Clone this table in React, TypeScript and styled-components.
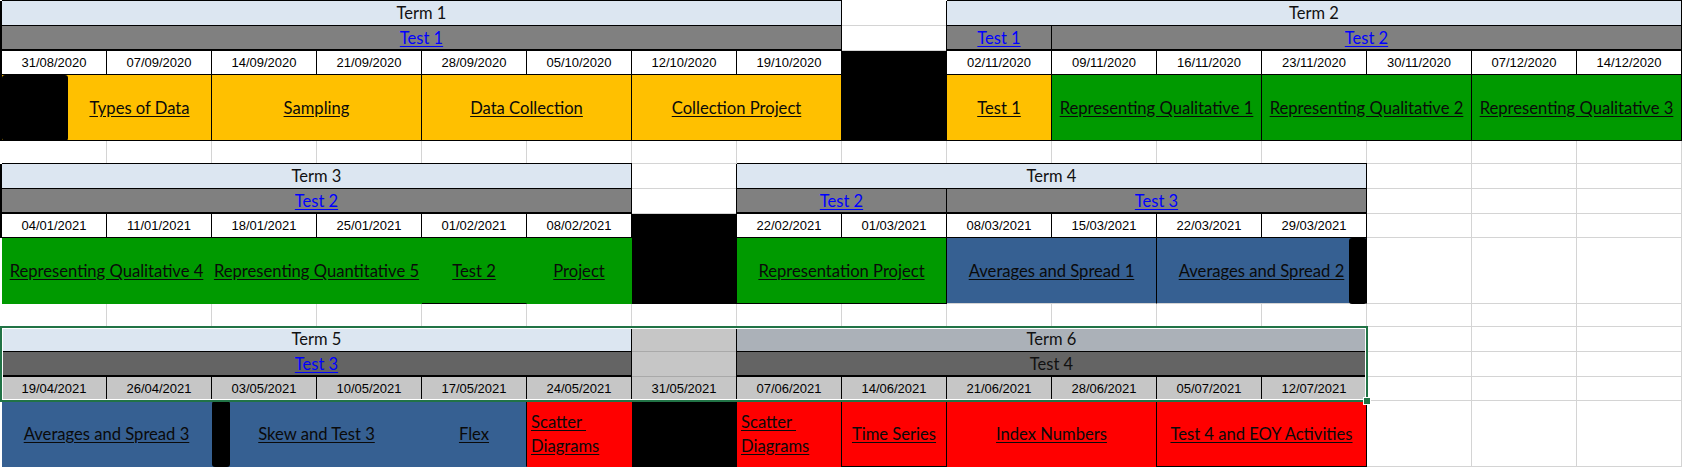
import React from "react";
import styled, { createGlobalStyle } from "styled-components";

const GlobalStyle = createGlobalStyle`
  html, body {
    margin: 0;
    padding: 0;
    background: #fff;
  }
  body {
    width: 1683px;
    height: 470px;
    overflow: hidden;
  }
`;

const COL = 105;
const GRID = "#d4d4d4";
const INK = "#000";

const Sheet = styled.div`
  padding: 1px 0 0 2px;
  display: flex;
  flex-direction: column;
  font-family: Lato, "Liberation Sans", sans-serif;
`;

const Block = styled.div`
  position: relative;
  display: grid;
  grid-template-columns: repeat(16, ${COL}px);
  grid-template-rows: 25px 25px 24px 66px 23px;
`;

type CellProps = {
  $span?: number;
  $bg?: string;
  $line?: string;
  $bottom?: string;
  $thick?: boolean;
  $top?: boolean;
  $left?: number;
  $align?: "center" | "left";
};

const Cell = styled.div<CellProps>`
  position: relative;
  grid-column: span ${(p) => p.$span ?? 1};
  box-sizing: border-box;
  display: flex;
  align-items: center;
  justify-content: ${(p) => (p.$align === "left" ? "flex-start" : "center")};
  padding-left: ${(p) => (p.$align === "left" ? "4px" : "0")};
  background: ${(p) => p.$bg ?? "#fff"};
  border-right: 1px solid ${(p) => p.$line ?? GRID};
  border-bottom: ${(p) => (p.$thick ? 2 : 1)}px solid
    ${(p) => p.$bottom ?? p.$line ?? GRID};
  box-shadow: ${(p) => {
    const s: string[] = [];
    if (p.$top) s.push(`0 -1px 0 ${INK}`);
    if (p.$left) s.push(`-${p.$left}px 0 0 ${INK}`);
    return s.length ? s.join(", ") : "none";
  }};
  white-space: nowrap;
`;

const Label = styled.span`
  font-family: Lato, "Liberation Sans", sans-serif;
  font-size: 16.5px;
  color: #111;
`;

const LinkLabel = styled(Label)`
  color: #0000ff;
  text-decoration: underline;
  text-underline-offset: 2px;
`;

const DateLabel = styled.span`
  font-family: "Liberation Sans", Arial, sans-serif;
  font-size: 13px;
  color: #000;
`;

const TopicLabel = styled.span<{ $shift?: number }>`
  font-family: Lato, "Liberation Sans", sans-serif;
  font-size: 16.6px;
  line-height: 24px;
  color: #0a0a0a;
  text-decoration: underline;
  text-underline-offset: 2px;
  margin-left: ${(p) => p.$shift ?? 0}px;
  white-space: nowrap;
`;

const TopicLines = styled.div`
  display: flex;
  flex-direction: column;
  align-items: flex-start;
`;

const Bar = styled.div<{ $side: "left" | "right"; $width: number }>`
  position: absolute;
  top: 0;
  bottom: -1px;
  ${(p) => p.$side}: ${(p) => (p.$side === "right" ? -1 : 0)}px;
  width: ${(p) => p.$width}px;
  background: #000;
  border-radius: 3px;
`;

const Selection = styled.div`
  position: absolute;
  top: -1px;
  left: -2px;
  width: 1368px;
  height: 76px;
  box-sizing: border-box;
  border: 2px solid #217346;
  box-shadow: inset 0 0 0 1px #fff;
  pointer-events: none;
`;

const Handle = styled.div`
  position: absolute;
  right: -5px;
  bottom: -5px;
  width: 6px;
  height: 6px;
  background: #217346;
  border: 1px solid #fff;
`;

const C = {
  term: "#dce6f1",
  termSel: "#abb1b8",
  test: "#808080",
  testSel: "#646464",
  sel: "#c6c6c6",
  orange: "#ffc000",
  green: "#009a00",
  blue: "#366092",
  red: "#ff0000",
  black: "#000",
};

type Head = {
  kind: "term" | "test" | "blank";
  span?: number;
  text?: string;
  link?: boolean;
  bg?: string;
  line?: string;
  left?: number;
};

type Topic = {
  span?: number;
  bg: string;
  lines?: string[];
  line?: string;
  bottom?: string;
  left?: number;
  lead?: number;
  trail?: number;
  shift?: number;
  align?: "center" | "left";
};

type Day = { date?: string; black?: boolean; bg?: string; blank?: boolean; left?: number };

function blanks(n: number): Head[] {
  return Array.from({ length: n }, () => ({ kind: "blank" as const }));
}

function days(list: string[], bg?: string): Day[] {
  return list.map((date) => ({ date, bg }));
}

function HeadRow({ cells, row }: { cells: Head[]; row: "term" | "test" }) {
  return (
    <>
      {cells.map((c, i) => {
        if (c.kind === "blank") {
          return <Cell key={i} $span={c.span} $bg={c.bg} $line={c.line} />;
        }
        return (
          <Cell
            key={i}
            $span={c.span}
            $bg={c.bg}
            $line={INK}
            $thick={row === "test"}
            $top={row === "term"}
            $left={c.left ?? 1}
          >
            {c.link ? <LinkLabel>{c.text}</LinkLabel> : <Label>{c.text}</Label>}
          </Cell>
        );
      })}
    </>
  );
}

function DateRow({ cells }: { cells: Day[] }) {
  return (
    <>
      {cells.map((d, i) =>
        d.blank ? (
          <Cell key={i} />
        ) : (
          <Cell key={i} $bg={d.black ? C.black : d.bg ?? "#fff"} $line={INK} $left={d.left}>
            {d.date && <DateLabel>{d.date}</DateLabel>}
          </Cell>
        )
      )}
    </>
  );
}

function TopicRow({ cells }: { cells: (Topic | null)[] }) {
  return (
    <>
      {cells.map((t, i) =>
        t === null ? (
          <Cell key={i} />
        ) : (
          <Cell
            key={i}
            $span={t.span}
            $bg={t.bg}
            $line={t.line ?? INK}
            $bottom={t.bottom}
            $left={t.left}
            $align={t.align}
          >
            {t.lead && <Bar $side="left" $width={t.lead} />}
            {t.trail && <Bar $side="right" $width={t.trail} />}
            {t.lines && t.lines.length > 1 ? (
              <TopicLines>
                {t.lines.map((l) => (
                  <TopicLabel key={l}>{l}</TopicLabel>
                ))}
              </TopicLines>
            ) : t.lines ? (
              <TopicLabel $shift={t.shift}>{t.lines[0]}</TopicLabel>
            ) : null}
          </Cell>
        )
      )}
    </>
  );
}

function EmptyRow() {
  return (
    <>
      {Array.from({ length: 16 }, (_, i) => (
        <Cell key={i} />
      ))}
    </>
  );
}

const none = (n: number) => Array.from({ length: n }, () => null);

export default function App() {
  return (
    <>
      <GlobalStyle />
      <Sheet>
        <Block>
          <HeadRow
            row="term"
            cells={[
              { kind: "term", span: 8, text: "Term 1", bg: C.term, left: 2 },
              { kind: "blank" },
              { kind: "term", span: 7, text: "Term 2", bg: C.term },
            ]}
          />
          <HeadRow
            row="test"
            cells={[
              { kind: "test", span: 8, text: "Test 1", link: true, bg: C.test, left: 2 },
              { kind: "blank" },
              { kind: "test", text: "Test 1", link: true, bg: C.test },
              { kind: "test", span: 6, text: "Test 2", link: true, bg: C.test },
            ]}
          />
          <DateRow
            cells={[
              ...days(["31/08/2020", "07/09/2020", "14/09/2020", "21/09/2020", "28/09/2020", "05/10/2020", "12/10/2020", "19/10/2020"]),
              { black: true },
              ...days(["02/11/2020", "09/11/2020", "16/11/2020", "23/11/2020", "30/11/2020", "07/12/2020", "14/12/2020"]),
            ].map((d, i) => (i === 0 ? { ...d, left: 2 } : d))}
          />
          <TopicRow
            cells={[
              { span: 2, bg: C.orange, lines: ["Types of Data"], lead: 66, shift: 66, left: 2 },
              { span: 2, bg: C.orange, lines: ["Sampling"] },
              { span: 2, bg: C.orange, lines: ["Data Collection"] },
              { span: 2, bg: C.orange, lines: ["Collection Project"] },
              { bg: C.black },
              { bg: C.orange, lines: ["Test 1"] },
              { span: 2, bg: C.green, lines: ["Representing Qualitative 1"] },
              { span: 2, bg: C.green, lines: ["Representing Qualitative 2"] },
              { span: 2, bg: C.green, lines: ["Representing Qualitative 3"] },
            ]}
          />
          <EmptyRow />
        </Block>

        <Block>
          <HeadRow
            row="term"
            cells={[
              { kind: "term", span: 6, text: "Term 3", bg: C.term, left: 2 },
              { kind: "blank" },
              { kind: "term", span: 6, text: "Term 4", bg: C.term },
              ...blanks(3),
            ]}
          />
          <HeadRow
            row="test"
            cells={[
              { kind: "test", span: 6, text: "Test 2", link: true, bg: C.test, left: 2 },
              { kind: "blank" },
              { kind: "test", span: 2, text: "Test 2", link: true, bg: C.test },
              { kind: "test", span: 4, text: "Test 3", link: true, bg: C.test },
              ...blanks(3),
            ]}
          />
          <DateRow
            cells={[
              ...days(["04/01/2021", "11/01/2021", "18/01/2021", "25/01/2021", "01/02/2021", "08/02/2021"]),
              { black: true },
              ...days(["22/02/2021", "01/03/2021", "08/03/2021", "15/03/2021", "22/03/2021", "29/03/2021"]),
              { blank: true },
              { blank: true },
              { blank: true },
            ].map((d, i) => (i === 0 ? { ...d, left: 2 } : d))}
          />
          <TopicRow
            cells={[
              { span: 2, bg: C.green, line: C.green, lines: ["Representing Qualitative 4"] },
              { span: 2, bg: C.green, line: C.green, lines: ["Representing Quantitative 5"] },
              { bg: C.green, line: C.green, bottom: INK, lines: ["Test 2"] },
              { bg: C.green, line: C.green, lines: ["Project"] },
              { bg: C.black },
              { span: 2, bg: C.green, lines: ["Representation Project"] },
              { span: 2, bg: C.blue, bottom: GRID, lines: ["Averages and Spread 1"] },
              { span: 2, bg: C.blue, bottom: GRID, lines: ["Averages and Spread 2"], trail: 18 },
              ...none(3),
            ]}
          />
          <EmptyRow />
        </Block>

        <Block>
          <HeadRow
            row="term"
            cells={[
              { kind: "term", span: 6, text: "Term 5", bg: C.term, left: 2 },
              { kind: "blank", bg: C.sel, line: "#a9a9a9" },
              { kind: "term", span: 6, text: "Term 6", bg: C.termSel },
              ...blanks(3),
            ]}
          />
          <HeadRow
            row="test"
            cells={[
              { kind: "test", span: 6, text: "Test 3", link: true, bg: C.testSel, left: 2 },
              { kind: "blank", bg: C.sel, line: "#a9a9a9" },
              { kind: "test", span: 6, text: "Test 4", bg: C.testSel },
              ...blanks(3),
            ]}
          />
          <DateRow
            cells={[
              ...days(
                ["19/04/2021", "26/04/2021", "03/05/2021", "10/05/2021", "17/05/2021", "24/05/2021", "31/05/2021", "07/06/2021", "14/06/2021", "21/06/2021", "28/06/2021", "05/07/2021", "12/07/2021"],
                C.sel
              ),
              { blank: true },
              { blank: true },
              { blank: true },
            ]}
          />
          <TopicRow
            cells={[
              { span: 2, bg: C.blue, line: C.blue, bottom: C.blue, lines: ["Averages and Spread 3"] },
              { span: 2, bg: C.blue, line: C.blue, bottom: C.blue, lines: ["Skew and Test 3"], lead: 18 },
              { bg: C.blue, bottom: C.blue, lines: ["Flex"] },
              { bg: C.red, line: C.red, bottom: C.red, lines: ["Scatter\u00a0", "Diagrams"], align: "left" },
              { bg: C.black },
              { bg: C.red, line: C.red, bottom: C.red, lines: ["Scatter\u00a0", "Diagrams"], align: "left" },
              { bg: C.red, lines: ["Time Series"], left: 1 },
              { span: 2, bg: C.red, line: C.red, bottom: C.red, lines: ["Index Numbers"] },
              { span: 2, bg: C.red, lines: ["Test 4 and EOY Activities"], left: 1 },
              ...none(3),
            ]}
          />
          <Selection>
            <Handle />
          </Selection>
        </Block>
      </Sheet>
    </>
  );
}
